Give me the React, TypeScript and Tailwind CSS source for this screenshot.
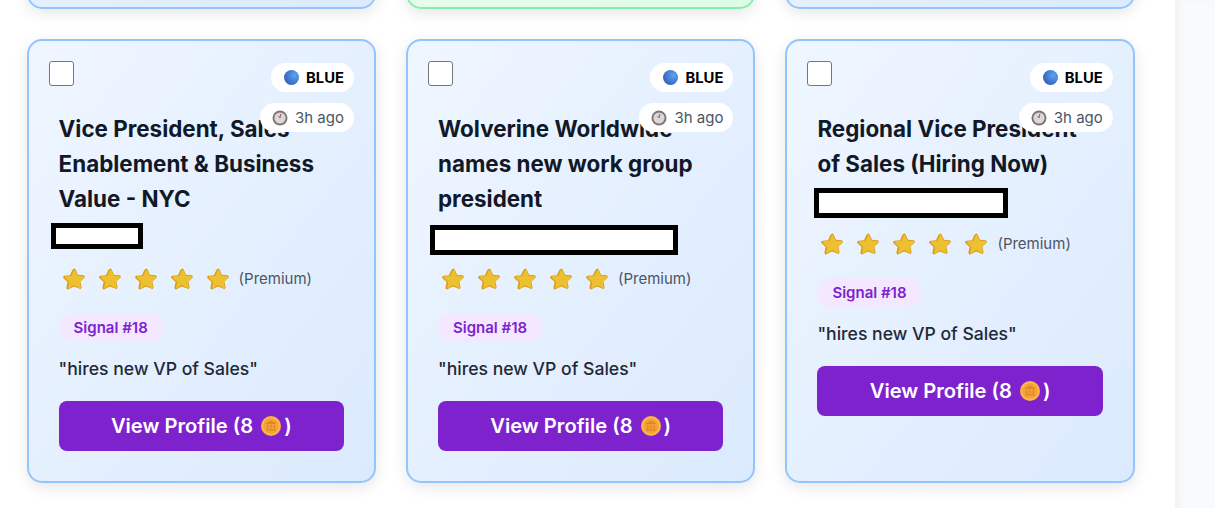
import React from "react";

const font = { fontFamily: "Inter, 'Noto Sans', sans-serif" };

function Star() {
  return (
    <svg width="24" height="24" viewBox="0 0 24 24" className="shrink-0">
      <path
        d="M12 1.500c.9 0 1.500.6 1.900 1.500l2.100 4.700 5.100.6c1.700.2 2.300 1.700 1.100 2.800l-3.800 3.500 1.100 5.200c.3 1.600-1 2.600-2.400 1.800L12 19.500l-5.100 2.600c-1.400.8-2.700-.2-2.400-1.800l1.100-5.200-3.800-3.500c-1.200-1.100-.6-2.600 1.100-2.800l5.100-.6 2.100-4.700c.4-.9 1-1.500 1.900-1.500z"
        fill="#d99a1a"
      />
      <path
        d="M12 2.400c.7 0 1.100.5 1.400 1.200l2.300 5 5.300.6c1.200.2 1.600 1.100.8 1.900l-4 3.700 1 5c.2 1-.6 1.600-1.500 1.100L12 18l-4.300 3c-.9.500-1.700-.1-1.500-1.100l1-5-4-3.700c-.8-.8-.4-1.700.8-1.900l5.300-.6 2.300-5c.3-.7.700-1.200 1.400-1.200z"
        fill="#edc02f"
      />
    </svg>
  );
}

function Globe({ id }: { id: string }) {
  return (
    <svg width="15" height="15" viewBox="0 0 15 15" className="shrink-0">
      <defs>
        <radialGradient id={id} cx="0.7" cy="0.35" r="0.8">
          <stop offset="0" stopColor="#5fa3ea" />
          <stop offset="0.6" stopColor="#3f78d4" />
          <stop offset="1" stopColor="#3c55a8" />
        </radialGradient>
      </defs>
      <circle cx="7.500" cy="7.500" r="7.500" fill={`url(#${id})`} />
    </svg>
  );
}

function Clock() {
  return (
    <svg width="16" height="16" viewBox="0 0 16 16" className="shrink-0">
      <circle cx="8" cy="8" r="7.500" fill="#7b7673" />
      <circle cx="8" cy="8" r="5.600" fill="#dcd7d9" />
      <path d="M8 8 L8.800 3.800" stroke="#e0486a" strokeWidth="1.200" />
      <path d="M8 8 L6.500 6" stroke="#77787c" strokeWidth="1" />
    </svg>
  );
}

function Coin() {
  return (
    <svg width="20" height="20" viewBox="0 0 20 20" className="shrink-0">
      <circle cx="10" cy="10" r="10" fill="#fcb445" />
      <circle cx="10" cy="10" r="7.600" fill="#f5a136" />
      <path d="M10 4.500 L15 7.300 V8 H5 V7.300 Z" fill="#d98a2c" />
      <path d="M6 8.800h1.400v4H6zM9.300 8.800h1.400v4H9.300zM12.600 8.800H14v4h-1.400z" fill="#d98a2c" />
      <path d="M5 13.300h10v1.300H5z" fill="#d98a2c" />
    </svg>
  );
}

type CardProps = {
  id: string;
  title: string[];
  box: string;
};

function Card({ id, title, box }: CardProps) {
  return (
    <div className="relative flex flex-col rounded-[15px] border-2 border-[#93c5fd] bg-gradient-to-br from-[#eff6ff] to-[#dbeafe] px-[30px] pt-[70px] pb-[30px] shadow-[0_4px_15px_rgba(0,0,0,0.1)]">
      <div className="absolute left-[20px] top-[20px] h-[25px] w-[25px] rounded-[3px] border border-[#767676] bg-white" />
      <div className="absolute right-[20px] top-[22px] flex h-[29px] items-center gap-[7px] rounded-full bg-white pl-[13px] pr-[10px] text-[14.8px] font-bold text-black">
        <Globe id={id} />
        <span className="pt-[2px]">BLUE</span>
      </div>
      <div className="absolute right-[20px] top-[62px] flex h-[29px] items-center gap-[7px] rounded-full bg-white pl-[12px] pr-[10px] text-[15px] text-[#4b5563]">
        <Clock />
        <span className="pt-[2px]">3h ago</span>
      </div>
      <h3 className="m-0 text-[22.4px] font-bold leading-[35px] text-[#111827]">
        {title.map((line) => (
          <div key={line} className="whitespace-nowrap">{line}</div>
        ))}
      </h3>
      <div className="h-[51px]">
        <div className={`box-border border-[5px] border-black bg-white ${box}`} />
      </div>
      <div className="flex h-[24px] items-center">
        <div className="ml-[3px] flex gap-[12px]">
          <Star />
          <Star />
          <Star />
          <Star />
          <Star />
        </div>
        <span className="ml-[9px] text-[15px] text-[#4b5563]">(Premium)</span>
      </div>
      <div className="mt-[22px] self-start rounded-full bg-[#f3e8ff] px-[15px] py-[5px] text-[15px] font-semibold leading-[19px] text-[#7e22ce]">
        Signal #18
      </div>
      <p className="m-0 mt-[13px] text-[17.6px] font-medium leading-[28px] text-[#1f2937]">
        "hires new VP of Sales"
      </p>
      <button className="mt-[18px] flex h-[50px] items-center justify-center rounded-[8px] bg-[#7e22ce] text-[20.15px] font-semibold text-white">
        <span>View Profile (8</span>
        <span className="ml-[8px] mr-[3px]"><Coin /></span>
        <span>)</span>
      </button>
    </div>
  );
}

function Stub({ green }: { green?: boolean }) {
  return (
    <div
      className={
        green
          ? "h-[100px] rounded-[15px] border-2 border-[#86efac] bg-gradient-to-br from-[#f0fdf4] to-[#dcfce7] shadow-[0_4px_15px_rgba(0,0,0,0.1)]"
          : "h-[100px] rounded-[15px] border-2 border-[#93c5fd] bg-gradient-to-br from-[#eff6ff] to-[#dbeafe] shadow-[0_4px_15px_rgba(0,0,0,0.1)]"
      }
    />
  );
}

export default function App() {
  return (
    <div className="flex h-[508px] w-[1215px] overflow-hidden bg-white" style={font}>
      <main className="min-w-0 flex-1 overflow-hidden pl-[26.6px] pr-[40.2px]">
        <div className="-mt-[91px] grid grid-cols-3 gap-[30px]">
          <Stub />
          <Stub green />
          <Stub />
          <Card
            id="g1"
            title={["Vice President, Sales", "Enablement & Business", "Value - NYC"]}
            box="-ml-[8px] mt-[7px] h-[26px] w-[92px]"
          />
          <Card
            id="g2"
            title={["Wolverine Worldwide", "names new work group", "president"]}
            box="-ml-[8px] mt-[9px] h-[30px] w-[248px]"
          />
          <Card
            id="g3"
            title={["Regional Vice President", "of Sales (Hiring Now)"]}
            box="-ml-[3px] mt-[7px] h-[30px] w-[194px]"
          />
        </div>
      </main>
      <aside className="h-full w-[40px] shrink-0 bg-[#f9fafb] shadow-[inset_6px_0_10px_-4px_rgba(0,0,0,0.05)]" />
    </div>
  );
}
